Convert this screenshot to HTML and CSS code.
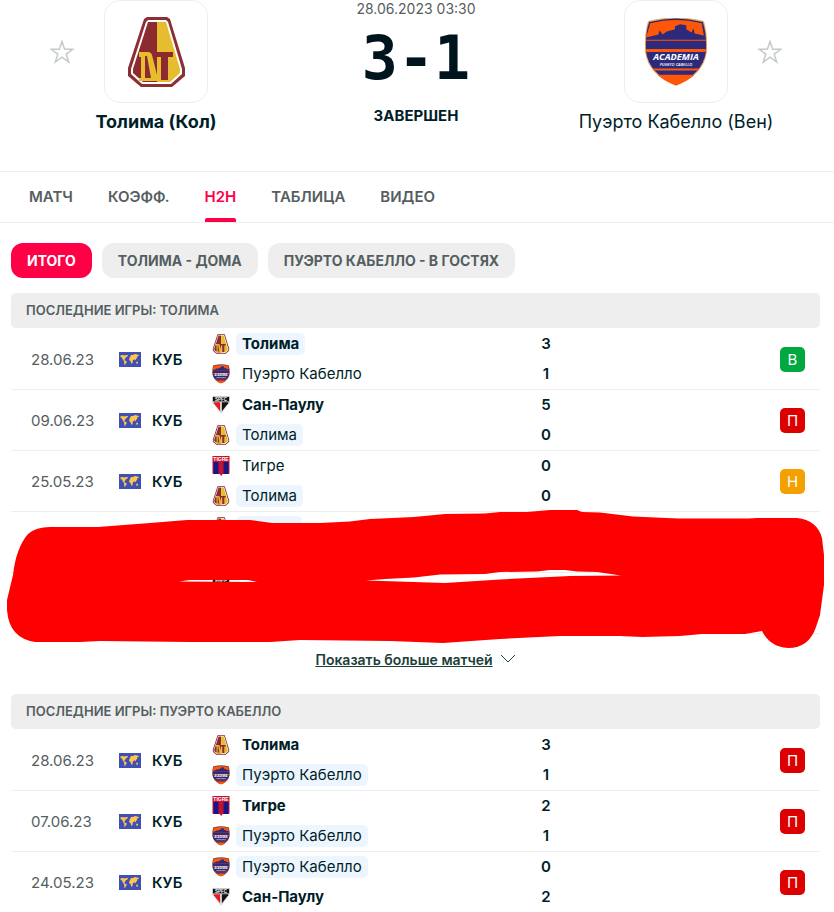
FILE: index.html
```html
<!DOCTYPE html>
<html lang="ru">
<head>
  <meta charset="utf-8"/>
  <meta name="viewport" content="width=device-width, initial-scale=1">
  <title>Толима - Пуэрто Кабелло</title>
  <link rel="stylesheet" href="styles.css">
</head>
<body>
  <!-- shared icons -->
  <svg class="sprite" width="0" height="0" aria-hidden="true">
    <symbol id="star" viewBox="0 0 24 24">
      <path d="M12 1.5l2.6 7.8h8.2l-6.6 4.8 2.5 7.9-6.7-4.9L5.300 22l2.500-7.900L1.200 9.300h8.200z" fill="none" stroke="#c4c9cb" stroke-width="1.5"/>
    </symbol>
    <symbol id="tolima" viewBox="0 0 57 70">
      <path d="M19 0h20l3 2 15 49v8L44 70H13L0 59v-8L16 2z" fill="#8c2f35"/>
      <path d="M20 3h18l2 2 14 47v5L43 67H14L3 57v-5L18 5z" fill="#fff"/>
      <path d="M20 5h9v60H15L5 56v-4z" fill="#8c2a2f"/>
      <path d="M29 5h9l14 47v4L42 65H29z" fill="#e6bd2e"/>
      <path fill-rule="evenodd" d="M11 35h9q3 0 4 3l5 20v6H11v-3h2V40h-2zM17 39v22h6l-4-22z" fill="#e6bd2e"/>
      <path d="M26 35h19v5h-5v23h-7V40h-6z" fill="#8c2a2f"/>
    </symbol>
    <symbol id="academia" viewBox="0 1 62 66">
      <path d="M4 4Q31-3 58 4q4 12 3 30-3 22-30 33Q4 56 1 34 0 16 4 4z" fill="#e9a55c"/>
      <path d="M5 5Q31-2 57 5q4 12 3 29-3 21-29 32Q5 55 2 34 1 16 5 5z" fill="#2d2a7c"/>
      <path d="M6 6q25-6 50 0l2 12-9-2-1-5-2 4-5-3V8l-6-1-5 2v3l-8 2-4 3-3-4-1 4-12 3z" fill="#ff5608"/>
      <path d="M2 22h58v1H2zM2 31h58v3H2zM8 50h46l-2 2H10zM13 56h36q-8 7-18 10-10-3-18-10z" fill="#ff5608"/>
      <text x="31" y="42" text-anchor="middle" class="crest-name">ACADEMIA</text>
      <text x="31" y="48" text-anchor="middle" class="crest-sub">PUERTO CABELLO</text>
    </symbol>
    <symbol id="saopaulo" viewBox="0 0 20 20">
      <path d="M0 0h20v7L10 20 0 7z" fill="#ddd"/>
      <path d="M1 1h18v5H1z" fill="#111"/>
      <path d="M2 7h7v10L2 8z" fill="#e51b23"/>
      <path d="M11 7h7v1l-7 9z" fill="#111"/>
      <text x="10" y="5" text-anchor="middle" class="crest-short">SPFC</text>
    </symbol>
    <symbol id="tigre" viewBox="0 0 17 20">
      <path d="M0 0h17v17q0 1-1 1h-6l-1 2-2-2H1q-1 0-1-1z" fill="#c4122f"/>
      <path d="M1 6h5v12H1zM11 6h5v12h-5z" fill="#181686"/>
      <text x="8.500" y="5" text-anchor="middle" class="crest-short">TIGRE</text>
    </symbol>
    <symbol id="world" viewBox="0 0 22 15">
      <path d="M0 0h22v15H0z" fill="#4150b5"/>
      <path d="M1.500 3.500L3 3l3 .5L7 3l2 0-1 2-1 0-1 2-1 1 2 1 1 1-1 1-1 2-.5 0-.5-4L4 8 3 5.500l-1.500-.5zM11 5l1-2 2 0 2-1 4 1-.5 1-1 0-.5 2-1 1-.5 1.500L15.500 7 15 8l-1 0-.5 3-1 1-1-3-1.500-1 .5-2z" fill="#ffc74a"/>
      <path d="M17.500 9.500l1.500 .5 0 1.500-2 0z" fill="#ffc74a"/>
    </symbol>
  </svg>

  <header class="match">
    <div class="team">
      <div class="team-top">
        <button class="star" aria-label="В избранное"><svg><use href="#star"/></svg></button>
        <a class="logo" href="#" aria-label="Толима"><svg width="57" height="70"><use href="#tolima"/></svg></a>
      </div>
      <a class="team-name winner" href="#">Толима (Кол)</a>
    </div>
    <div class="result">
      <div class="date">28.06.2023 03:30</div>
      <div class="total">3-1</div>
      <div class="status">ЗАВЕРШЕН</div>
    </div>
    <div class="team away">
      <div class="team-top">
        <button class="star" aria-label="В избранное"><svg><use href="#star"/></svg></button>
        <a class="logo" href="#" aria-label="Пуэрто Кабелло"><svg width="64" height="68"><use href="#academia"/></svg></a>
      </div>
      <a class="team-name" href="#">Пуэрто Кабелло (Вен)</a>
    </div>
  </header>

  <nav class="tabs">
    <a href="#">МАТЧ</a>
    <a href="#">КОЭФФ.</a>
    <a href="#" class="active">H2H</a>
    <a href="#">ТАБЛИЦА</a>
    <a href="#">ВИДЕО</a>
  </nav>

  <main>
    <div class="filters">
      <button class="chip active">ИТОГО</button>
      <button class="chip">ТОЛИМА - ДОМА</button>
      <button class="chip">ПУЭРТО КАБЕЛЛО - В ГОСТЯХ</button>
    </div>

    <section>
      <h2>ПОСЛЕДНИЕ ИГРЫ: ТОЛИМА</h2>
      <div class="games-wrap">
        <table class="games">
          <tr>
            <td class="day">28.06.23</td>
            <td class="event"><div><svg class="flag"><use href="#world"/></svg>КУБ</div></td>
            <td class="teams">
              <div><svg class="crest"><use href="#tolima"/></svg><span class="mark winner">Толима</span></div>
              <div><svg class="crest"><use href="#academia"/></svg><span>Пуэрто Кабелло</span></div>
            </td>
            <td class="score"><div>3</div><div>1</div></td>
            <td class="outcome"><span class="badge win">В</span></td>
          </tr>
          <tr>
            <td class="day">09.06.23</td>
            <td class="event"><div><svg class="flag"><use href="#world"/></svg>КУБ</div></td>
            <td class="teams">
              <div><svg class="crest"><use href="#saopaulo"/></svg><span class="winner">Сан-Паулу</span></div>
              <div><svg class="crest"><use href="#tolima"/></svg><span class="mark">Толима</span></div>
            </td>
            <td class="score"><div>5</div><div>0</div></td>
            <td class="outcome"><span class="badge loss">П</span></td>
          </tr>
          <tr>
            <td class="day">25.05.23</td>
            <td class="event"><div><svg class="flag"><use href="#world"/></svg>КУБ</div></td>
            <td class="teams">
              <div><svg class="crest"><use href="#tigre"/></svg><span>Тигре</span></div>
              <div><svg class="crest"><use href="#tolima"/></svg><span class="mark">Толима</span></div>
            </td>
            <td class="score"><div>0</div><div>0</div></td>
            <td class="outcome"><span class="badge draw">Н</span></td>
          </tr>
          <tr>
            <td class="day"></td>
            <td class="event"></td>
            <td class="teams">
              <div><svg class="crest"><use href="#tolima"/></svg><span class="mark blank"></span></div>
              <div></div>
            </td>
            <td class="score"></td>
            <td class="outcome"></td>
          </tr>
          <tr>
            <td class="day"></td>
            <td class="event"></td>
            <td class="teams">
              <div><svg class="crest"><use href="#saopaulo"/></svg></div>
              <div></div>
            </td>
            <td class="score"></td>
            <td class="outcome"></td>
          </tr>
        </table>
        <!-- red marker over the last two games -->
        <svg class="marker" viewBox="7 509 818 140" preserveAspectRatio="none" aria-hidden="true">
          <path fill="#f00" fill-rule="evenodd" d="M50 527H98L150 523 187 520H250L272 523H320L350 521.500 370 519 414 517 445 514 485 513.500 500 512H527L550 510H577L582 512 600 512.500 633 516.500 678 518.500H748L757 518H797Q817 520 822 538L824 555V585L820 615 816 627Q809 648 788 648 770 647 762 631L745 634H702L680 636 642 637 620 636H560L500 639 443 643 390 641 300 640 270 642H190L100 641 80 642H35Q9 638 7 610V600L13 575Q16 548 28 534 36 527 50 527zM179 581.500L190 580H248L257 582zM366 580.500L385 579 414 577.500 440 574.500 485 574 500 572 537 571.500 550 570H565L577 571.500 597 572 621 575.500 570 576 500 579.500 445 583 414 582z"/>
        </svg>
      </div>
      <div class="more">
        <a href="#">Показать больше матчей</a>
        <svg width="16" height="10" viewBox="0 0 16 10"><path d="M1 1l7 7 7-7" fill="none" stroke="#1b4037" stroke-width="1"/></svg>
      </div>
    </section>

    <section>
      <h2>ПОСЛЕДНИЕ ИГРЫ: ПУЭРТО КАБЕЛЛО</h2>
      <table class="games">
        <tr>
          <td class="day">28.06.23</td>
          <td class="event"><div><svg class="flag"><use href="#world"/></svg>КУБ</div></td>
          <td class="teams">
            <div><svg class="crest"><use href="#tolima"/></svg><span class="winner">Толима</span></div>
            <div><svg class="crest"><use href="#academia"/></svg><span class="mark">Пуэрто Кабелло</span></div>
          </td>
          <td class="score"><div>3</div><div>1</div></td>
          <td class="outcome"><span class="badge loss">П</span></td>
        </tr>
        <tr>
          <td class="day">07.06.23</td>
          <td class="event"><div><svg class="flag"><use href="#world"/></svg>КУБ</div></td>
          <td class="teams">
            <div><svg class="crest"><use href="#tigre"/></svg><span class="winner">Тигре</span></div>
            <div><svg class="crest"><use href="#academia"/></svg><span class="mark">Пуэрто Кабелло</span></div>
          </td>
          <td class="score"><div>2</div><div>1</div></td>
          <td class="outcome"><span class="badge loss">П</span></td>
        </tr>
        <tr>
          <td class="day">24.05.23</td>
          <td class="event"><div><svg class="flag"><use href="#world"/></svg>КУБ</div></td>
          <td class="teams">
            <div><svg class="crest"><use href="#academia"/></svg><span class="mark">Пуэрто Кабелло</span></div>
            <div><svg class="crest"><use href="#saopaulo"/></svg><span class="winner">Сан-Паулу</span></div>
          </td>
          <td class="score"><div>0</div><div>2</div></td>
          <td class="outcome"><span class="badge loss">П</span></td>
        </tr>
      </table>
    </section>
  </main>
</body>
</html>
```

FILE: styles.css
```css
body {
  margin: 0;
  background: #fff;
  color: #001e28;
  font-family: Inter, "Liberation Sans", sans-serif;
  font-size: 15px;
}
a {
  color: inherit;
  text-decoration: none;
}
button {
  border: none;
  background: none;
  padding: 0;
  font-family: inherit;
  cursor: pointer;
}
.sprite {
  position: absolute;
}
symbol {
  overflow: visible;
}
.winner {
  font-weight: 700;
}

/* match header */
.match {
  display: grid;
  grid-template-columns: 1fr 1fr 1fr;
  padding: 0 28px 37px 26px;
  border-bottom: 1px solid #eee;
}
.team {
  display: flex;
  flex-direction: column;
  align-items: center;
}
.team-top {
  display: flex;
  align-items: center;
  gap: 30px;
  padding-right: 54px;
}
.away .team-top {
  flex-direction: row-reverse;
  padding: 0 0 0 54px;
}
.star svg {
  display: block;
  width: 24px;
  height: 24px;
}
.logo {
  display: flex;
  align-items: center;
  justify-content: center;
  box-sizing: border-box;
  width: 104px;
  height: 103px;
  border: 1px solid #eee;
  border-radius: 16px;
}
.team-name {
  margin-top: 7px;
  font-size: 18px;
  line-height: 24px;
  white-space: nowrap;
}
.result {
  text-align: center;
}
.date {
  color: #555e61;
  font-size: 14px;
  line-height: 18px;
}
.total {
  margin-top: 9px;
  color: #00141e;
  font-family: "DejaVu Sans Mono", monospace;
  font-size: 60px;
  font-weight: 700;
  line-height: 62px;
}
.status {
  margin-top: 18px;
  font-weight: 700;
  line-height: 18px;
}

/* tabs */
.tabs {
  display: flex;
  gap: 35px;
  padding: 0 29px;
  border-bottom: 1px solid #eee;
  color: #555e61;
  font-weight: 600;
}
.tabs a {
  position: relative;
  line-height: 50px;
}
.tabs .active {
  color: #ff0046;
}
.tabs .active::after {
  content: "";
  position: absolute;
  left: 0;
  right: 0;
  bottom: 0;
  height: 4px;
  border-radius: 2px 2px 0 0;
  background: #ff0046;
}

main {
  padding: 20px 14px 0 11px;
}
.filters {
  display: flex;
  gap: 10px;
  margin-bottom: 15px;
}
.chip {
  height: 35px;
  padding: 0 16px;
  border-radius: 12px;
  background: #eee;
  color: #555e61;
  font-size: 14px;
  font-weight: 700;
}
.chip.active {
  background: #ff0046;
  color: #fff;
}

h2 {
  margin: 0;
  padding: 0 15px;
  border-radius: 5px;
  background: #eee;
  color: #555e61;
  font-size: 13px;
  font-weight: 600;
  line-height: 35px;
}

/* list of games */
.games-wrap {
  position: relative;
}
.games {
  width: 100%;
  margin-top: 1px;
  border-collapse: separate;
  border-spacing: 0;
  table-layout: fixed;
}
.games td {
  height: 60px;
  padding: 0;
  border-bottom: 1px solid #eee;
}
.games .day {
  width: 88px;
  padding-left: 20px;
  color: #555e61;
}
.event {
  width: 93px;
  font-weight: 600;
}
.event div {
  display: flex;
  align-items: center;
  gap: 11px;
}
.flag {
  width: 22px;
  height: 15px;
}
.teams div {
  display: flex;
  align-items: center;
  height: 30px;
}
.crest {
  width: 18px;
  height: 20px;
  margin-right: 6px;
}
.teams span {
  padding: 0 6px;
  line-height: 22px;
}
.teams .mark {
  border-radius: 5px;
  background: #edf6ff;
}
.teams .blank {
  width: 54px;
  height: 22px;
}
.score {
  width: 20px;
  text-align: center;
  font-weight: 600;
}
.score div {
  line-height: 30px;
}
.games .outcome {
  width: 249px;
  padding-right: 15px;
}
.badge {
  display: block;
  width: 25px;
  margin-left: auto;
  border-radius: 5px;
  color: #fff;
  line-height: 25px;
  text-align: center;
}
.win {
  background: #00a83f;
}
.loss {
  background: #dc0000;
}
.draw {
  background: #f3a000;
}
.marker {
  position: absolute;
  left: -4px;
  bottom: -15px;
  width: calc(100% + 9px);
  height: 140px;
}

.more {
  display: flex;
  align-items: center;
  justify-content: center;
  gap: 7px;
  height: 50px;
  margin-bottom: 10px;
  color: #1b4037;
  font-size: 14px;
  font-weight: 600;
}
.more a {
  text-decoration: underline;
}

/* lettering inside the crests */
.crest-name {
  fill: #fff;
  font: italic 700 9px "Open Sans", sans-serif;
}
.crest-sub {
  fill: #fff;
  font: italic 600 4px "Open Sans", sans-serif;
}
.crest-short {
  fill: #fff;
  font: 700 5px "Liberation Sans", sans-serif;
}
```
